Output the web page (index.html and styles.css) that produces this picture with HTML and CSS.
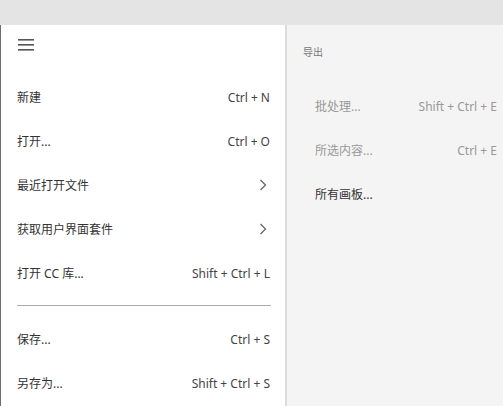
FILE: index.html
```html
<!DOCTYPE html>
<html>
<head>
  <title>文件菜单</title>
  <link rel="stylesheet" href="styles.css">
</head>
<body>
  <div class="titlebar"></div>
  <div class="main">
    <div class="menu">
      <div class="menu-header">
        <svg class="hamburger" width="16" height="12" viewBox="0 0 16 12">
          <rect x="0" y="0" width="16" height="1.6" fill="#555"/>
          <rect x="0" y="5" width="16" height="1.6" fill="#555"/>
          <rect x="0" y="10" width="16" height="1.6" fill="#555"/>
        </svg>
      </div>
      <div class="menu-item"><span>新建</span><span class="shortcut">Ctrl + N</span></div>
      <div class="menu-item"><span>打开...</span><span class="shortcut">Ctrl + O</span></div>
      <div class="menu-item"><span>最近打开文件</span>
        <svg class="chevron" width="8" height="12" viewBox="0 0 8 12"><path d="M1.5 1 L6.5 6 L1.5 11" fill="none" stroke="#666" stroke-width="1.3"/></svg>
      </div>
      <div class="menu-item"><span>获取用户界面套件</span>
        <svg class="chevron" width="8" height="12" viewBox="0 0 8 12"><path d="M1.5 1 L6.5 6 L1.5 11" fill="none" stroke="#666" stroke-width="1.3"/></svg>
      </div>
      <div class="menu-item"><span>打开 CC 库...</span><span class="shortcut">Shift + Ctrl + L</span></div>
      <div class="divider"></div>
      <div class="menu-item"><span>保存...</span><span class="shortcut">Ctrl + S</span></div>
      <div class="menu-item"><span>另存为...</span><span class="shortcut">Shift + Ctrl + S</span></div>
    </div>
    <div class="submenu">
      <div class="submenu-label">导出</div>
      <div class="submenu-item disabled"><span>批处理...</span><span class="shortcut">Shift + Ctrl + E</span></div>
      <div class="submenu-item disabled"><span>所选内容...</span><span class="shortcut">Ctrl + E</span></div>
      <div class="submenu-item"><span>所有画板...</span></div>
    </div>
  </div>
</body>
</html>
```

FILE: styles.css
```css
/* Basic Styling */
body {
  margin: 0;
  width: 503px;
  height: 406px;
  overflow: hidden;
  font-family: "Noto Sans", "Noto Sans CJK SC", sans-serif;
  font-size: 12px;
  color: #333;
  background-color: #f4f4f4;
}
.titlebar {
  height: 25px;
  background-color: #e4e4e4;
}
.main {
  display: flex;
  height: 381px;
}
.menu {
  width: 284px;
  background-color: #fff;
  border-left: 1px solid #6e6e6e;
  border-right: 2px solid #dcdcdc;
}
.menu-header {
  height: 50px;
  padding-left: 17px;
  box-sizing: border-box;
  padding-top: 14px;
}
.hamburger {
  display: block;
}
.menu-item {
  height: 44px;
  display: flex;
  justify-content: space-between;
  align-items: center;
  padding: 0 15px 0 16px;
}
.shortcut {
  color: #444;
}
.chevron {
  display: block;
  margin-right: 3px;
}
.divider {
  height: 1px;
  background-color: #ababab;
  margin: 10px 14px 11px 16px;
}
.submenu {
  flex: 1;
  background-color: #f4f4f4;
}
.submenu-label {
  font-size: 10px;
  color: #777;
  height: 20px;
  line-height: 20px;
  padding: 17px 0 0 16px;
  margin-bottom: 22px;
}
.submenu-item {
  height: 44px;
  display: flex;
  justify-content: space-between;
  align-items: center;
  padding: 0 6px 0 28px;
}
.submenu-item.disabled {
  color: #999;
}
.submenu-item.disabled .shortcut {
  color: #999;
}
```
